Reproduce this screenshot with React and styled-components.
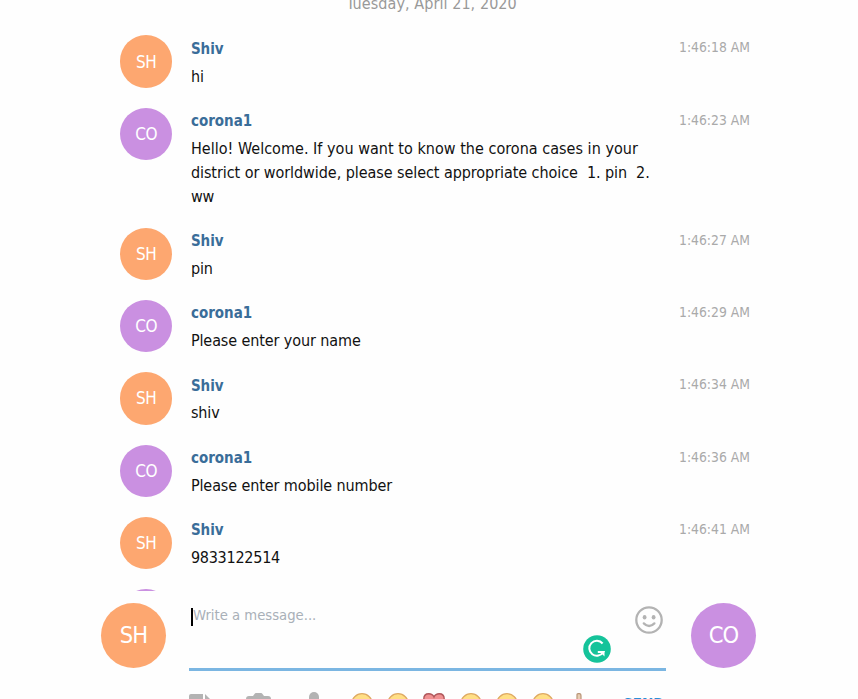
import React from "react";
import styled, { createGlobalStyle } from "styled-components";

const Global = createGlobalStyle`
  * { box-sizing: border-box; }
  body {
    margin: 0;
    background: #fefefe;
    overflow: hidden;
    font-family: "DejaVu Sans Condensed", Tahoma, sans-serif;
  }
`;

const Page = styled.div`
  display: flex;
  flex-direction: column;
  height: 699px;
  overflow: hidden;
`;

const History = styled.main`
  display: flex;
  flex-direction: column;
  flex: none;
  height: 591px;
  padding-left: 120px;
  overflow: hidden;
`;

const DateLabel = styled.div`
  flex: none;
  width: 623px;
  height: 35.4px;
  color: #999;
  font-size: 16px;
  line-height: 20px;
  letter-spacing: 0.07px;
  text-align: center;

  span {
    display: block;
    margin-top: -6px;
  }
`;

const Message = styled.article`
  display: flex;
  flex: none;
  width: 630px;
  min-height: 52.3px;
  margin-bottom: 20px;
`;

const Avatar = styled.div`
  display: flex;
  flex: none;
  align-items: center;
  justify-content: center;
  width: ${(p) => p.$size}px;
  height: ${(p) => p.$size}px;
  padding-bottom: ${(p) => (p.$size > 60 ? 2 : 0)}px;
  border-radius: 50%;
  background: ${(p) => (p.$tone === "orange" ? "#fda770" : "#ca90e1")};
  color: #fff;
  font-size: ${(p) => (p.$size > 60 ? 23.5 : 17)}px;
  letter-spacing: ${(p) => (p.$size > 60 ? -0.9 : -0.5)}px;
`;

const Body = styled.div`
  width: 475px;
  margin-left: 18.6px;
`;

const Author = styled.div`
  height: 29.2px;
  padding-top: 3.3px;
  color: #3a6d99;
  font-size: 15px;
  font-weight: 700;
  line-height: 20px;
`;

const Text = styled.p`
  margin: 0 0 -1.2px;
  color: #111;
  font-size: 16px;
  line-height: 24px;
  white-space: pre;
`;

const Line = styled.span`
  display: block;
  letter-spacing: ${(p) => p.$spacing}px;
`;

const Time = styled.time`
  width: 72px;
  margin-left: auto;
  padding-top: 2px;
  color: #aaa;
  font-size: 13.8px;
  line-height: 20px;
  text-align: right;
  white-space: nowrap;
`;

const Composer = styled.footer`
  display: flex;
  flex: none;
  align-items: flex-start;
  height: 80px;
  padding: 12px 0 0 101px;
`;

const Field = styled.div`
  display: flex;
  justify-content: space-between;
  width: 477px;
  height: 68px;
  margin: 0 25px 0 23px;
  border-bottom: 3px solid #7bb6e2;
`;

const Placeholder = styled.div`
  display: flex;
  align-items: flex-start;
  height: 20px;
  margin: 4px 0 0 2px;
  color: #a9b0b8;
  font-size: 14.7px;
  line-height: 16px;
`;

const Caret = styled.span`
  width: 2px;
  height: 18px;
  margin-top: 1px;
  background: #000;
`;

const Tools = styled.div`
  display: flex;
  align-items: flex-start;
  padding-right: 3px;
  gap: 24.5px;

  svg { display: block; }
  svg:first-child { margin-top: 32px; }
  svg:last-child { margin-top: 3px; }
`;

const Actions = styled.div`
  display: flex;
  flex: none;
  height: 28px;
  padding-left: 189px;
`;

const Slot = styled.div`
  flex: none;
  width: ${(p) => p.$w}px;
  padding-top: ${(p) => p.$top}px;

  svg { display: block; }
`;

const Send = styled.div`
  padding-top: 24px;
  color: #2a8fd8;
  font-size: 15px;
  font-weight: 700;
  line-height: 20px;
`;

const people = {
  Shiv: { initials: "SH", tone: "orange" },
  corona1: { initials: "CO", tone: "purple" },
};

const messages = [
  { from: "Shiv", time: "1:46:18 AM", lines: [["hi"]] },
  {
    from: "corona1",
    time: "1:46:23 AM",
    lines: [
      ["Hello! Welcome. If you want to know the corona cases in your", 0.03],
      ["district or worldwide, please select appropriate choice  1. pin  2.", -0.06],
      ["ww"],
    ],
  },
  { from: "Shiv", time: "1:46:27 AM", lines: [["pin"]] },
  { from: "corona1", time: "1:46:29 AM", lines: [["Please enter your name"]] },
  { from: "Shiv", time: "1:46:34 AM", lines: [["shiv"]] },
  { from: "corona1", time: "1:46:36 AM", lines: [["Please enter mobile number"]] },
  { from: "Shiv", time: "1:46:41 AM", lines: [["9833122514", -0.25]] },
];

function Person({ name, size }) {
  return (
    <Avatar $size={size} $tone={people[name].tone}>
      {people[name].initials}
    </Avatar>
  );
}

function Grammar() {
  return (
    <svg width="28" height="28" viewBox="0 0 28 28" fill="none">
      <circle cx="14" cy="14" r="13.8" fill="#15c39a" />
      <path d="M19.6 8.5A7.5 7.5 0 1 0 20.3 17H14.8" stroke="#fff" strokeWidth="2" />
      <path d="M16.2 16h5.3v5.6z" fill="#fff" />
    </svg>
  );
}

function Smile() {
  return (
    <svg width="28" height="28" viewBox="0 0 28 28" fill="none">
      <circle cx="14" cy="14" r="12.7" stroke="#b3b3b3" strokeWidth="2.3" />
      <ellipse cx="9.6" cy="11.2" rx="1.9" ry="2.3" fill="#b3b3b3" />
      <ellipse cx="18.6" cy="11.2" rx="1.9" ry="2.3" fill="#b3b3b3" />
      <path d="M8.8 17.4q5.3 5.2 10.6 0" stroke="#b3b3b3" strokeWidth="2.3" strokeLinecap="round" />
    </svg>
  );
}

function Face() {
  return (
    <svg width="22" height="22" viewBox="0 0 22 22">
      <circle cx="11" cy="11" r="10.3" fill="#ffdf85" stroke="#dfaa63" strokeWidth="1.3" />
      <circle cx="7.3" cy="9" r="1.3" fill="#795132" />
      <circle cx="14.7" cy="9" r="1.3" fill="#795132" />
      <path d="M6 14q5 4 10 0" fill="none" stroke="#795132" strokeWidth="1.2" />
    </svg>
  );
}

function DocIcon() {
  return (
    <svg width="22" height="26" viewBox="0 0 22 26" fill="#b3b3b3">
      <path d="M2 1h12v9h8v16H0V3Q0 1 2 1z" />
      <path d="M16 1l6 6h-6z" />
    </svg>
  );
}

function CameraIcon() {
  return (
    <svg width="25" height="22" viewBox="0 0 25 22" fill="#b3b3b3">
      <path d="M3 4h4l1.5-2Q9 1 10 1h5q1 0 1.5 1L18 4h4q3 0 3 3v12q0 3-3 3H3q-3 0-3-3V7q0-3 3-3z" />
      <circle cx="12.5" cy="13" r="5" fill="#fff" />
    </svg>
  );
}

function MicIcon() {
  return (
    <svg width="18" height="26" viewBox="0 0 18 26" fill="none">
      <rect x="4" width="10" height="17" rx="5" fill="#b3b3b3" />
      <path d="M1 11v2a8 8 0 0 0 16 0v-2M9 21v5" stroke="#b3b3b3" strokeWidth="2" />
    </svg>
  );
}

function Heart() {
  return (
    <svg width="22" height="20" viewBox="0 0 22 20">
      <path
        d="M11 19Q1 12 .8 6C.8 2 3 .8 5.8.8Q9.5.8 11 4Q12.5.8 16.2.8C19 .8 21.2 2 21.2 6Q21 12 11 19z"
        fill="#f09091"
        stroke="#b0585c"
        strokeWidth="1.4"
      />
    </svg>
  );
}

function Thumb() {
  return (
    <svg width="19" height="22" viewBox="0 0 19 22">
      <path
        d="M7 9L8 6V1.7Q8 .7 9 .7h1.5Q12 .7 12 3v5h5q2 1 1 4l-2 8H5L1 18v-7z"
        fill="#e9cdb2"
        stroke="#b99678"
        strokeWidth="1.2"
      />
    </svg>
  );
}

export default function App() {
  return (
    <Page>
      <Global />
      <History>
        <DateLabel>
          <span>Tuesday, April 21, 2020</span>
        </DateLabel>
        {messages.map((m) => (
          <Message key={m.time}>
            <Person name={m.from} size={52.3} />
            <Body>
              <Author>{m.from}</Author>
              <Text>
                {m.lines.map(([text, spacing = -0.1]) => (
                  <Line key={text} $spacing={spacing}>{text}</Line>
                ))}
              </Text>
            </Body>
            <Time>{m.time}</Time>
          </Message>
        ))}
        <Message>
          <Person name="corona1" size={52.3} />
        </Message>
      </History>
      <Composer>
        <Person name="Shiv" size={65} />
        <Field>
          <Placeholder>
            <Caret />
            Write a message...
          </Placeholder>
          <Tools>
            <Grammar />
            <Smile />
          </Tools>
        </Field>
        <Person name="corona1" size={65} />
      </Composer>
      <Actions>
        <Slot $w={57} $top={22}><DocIcon /></Slot>
        <Slot $w={59} $top={21}><CameraIcon /></Slot>
        <Slot $w={46} $top={21}><MicIcon /></Slot>
        <Slot $w={36} $top={22}><Face /></Slot>
        <Slot $w={36} $top={22}><Face /></Slot>
        <Slot $w={37} $top={22}><Heart /></Slot>
        <Slot $w={36} $top={22}><Face /></Slot>
        <Slot $w={36} $top={22}><Face /></Slot>
        <Slot $w={37} $top={22}><Face /></Slot>
        <Slot $w={54} $top={22}><Thumb /></Slot>
        <Send>SEND</Send>
      </Actions>
    </Page>
  );
}
